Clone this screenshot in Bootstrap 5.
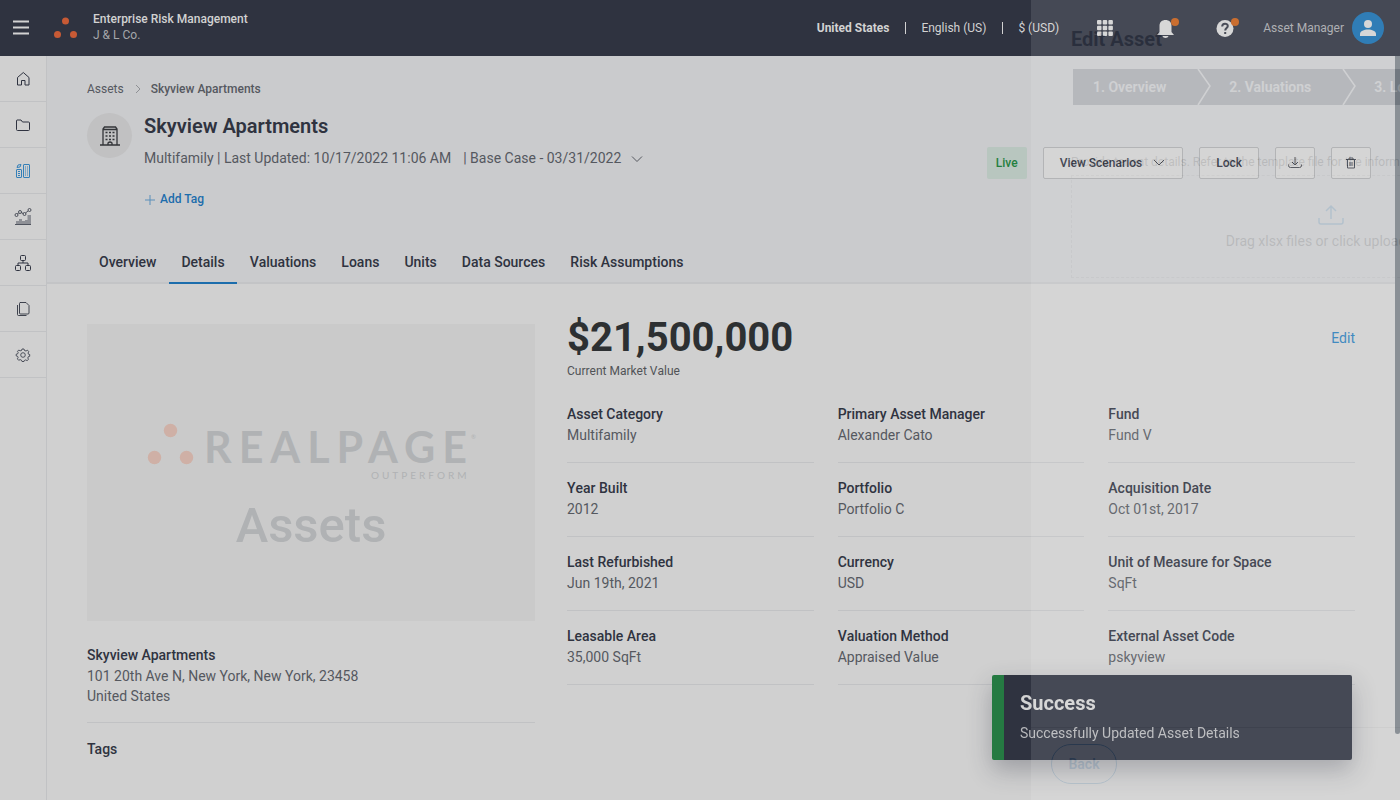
<!DOCTYPE html>
<html lang="en">
<head>
<meta charset="utf-8">
<meta name="viewport" content="width=device-width, initial-scale=1">
<title>Skyview Apartments - Enterprise Risk Management</title>
<link href="https://cdn.jsdelivr.net/npm/bootstrap@5.3.0/dist/css/bootstrap.min.css" rel="stylesheet">
<style>
:root { --ink:#2f3340; --muted:#55585f; --line:#c1c2c4; --blue:#1c6dac; --page:#d0d0d0; --hero:#cacbcd; --light:#d2d2d2; }
body { font-family: Roboto, "Liberation Sans", sans-serif; font-size:14px; line-height:21px; color:var(--muted); background:var(--page); height:100vh; overflow:hidden; }
a { text-decoration:none; }
.fw-medium { font-weight:500; }
.ink { color:var(--ink); }
.topbar { height:56px; background:var(--ink); color:var(--light); font-size:12px; line-height:16px; padding:0 16px 0 12px; }
.dim { color:#a5a7ab; }
.product { margin-left:15px; padding-bottom:2px; }
.plain-btn { background:none; border:0; padding:0; color:inherit; display:flex; align-items:center; }
.split { border-left:1px solid var(--light); height:12px; margin:0 15px 0 16px; }
.icon-btn { width:60px; justify-content:center; }
.avatar { width:32px; height:32px; background:#176ead; margin-left:8px; }
.rail { width:47px; border-right:1px solid var(--line); }
.rail a { height:46px; border-bottom:1px solid var(--line); color:var(--ink); display:flex; align-items:center; justify-content:center; }
.rail a.active { color:#3580b8; }
svg { fill:none; stroke:currentColor; flex-shrink:0; display:block; overflow:visible; }
.shell { height:calc(100vh - 56px); }
.content-pane { padding-right:5px; }
.hero { background:var(--hero); border-bottom:2px solid #c3c4c6; padding:24px 24px 0 40px; }
.crumbs { font-size:12px; line-height:18px; gap:10px; margin-bottom:15px; }
.asset-icon { width:45px; height:45px; background:#c1c1c2; color:#333539; }
.hero h1 { font-size:20px; line-height:26px; font-weight:600; margin-bottom:9px; }
.add-tag { font-size:12px; color:var(--blue); gap:4px; margin-top:20px; }
.actions { margin-top:34px; }
.act { height:32px; border:1px solid #aaabad; border-radius:2px; background:#d0d0d0; color:var(--ink); font-size:12px; font-weight:500; padding:0 16px; display:flex; align-items:center; justify-content:center; gap:10px; }
.act svg { color:#44474f; }
.act-square { width:40px; padding:0; }
.live { height:32px; line-height:32px; width:40px; background:#b8c6bf; color:#24803f; font-size:12px; border-radius:2px; text-align:center; }
.hero-tabs { margin-top:32px; gap:1px; }
.hero-tabs a { padding:10px 12px 9px; border-bottom:2px solid transparent; margin-bottom:-2px; color:var(--ink); font-weight:500; font-kerning:none; }
.hero-tabs a.active { border-color:var(--blue); }
.detail-grid { display:grid; grid-template-columns:448px minmax(0,1fr); gap:32px; padding:40px; }
.photo { width:100%; height:auto; background:#cacaca; margin-bottom:24px; }
.place { line-height:20px; border-bottom:1px solid var(--line); }
.price { font-size:40px; line-height:48px; font-weight:700; color:#2d3032; margin-top:-10px; }
.price-note { font-size:12px; line-height:18px; color:#505357; font-kerning:none; }
.facts { display:grid; grid-template-columns:repeat(3,minmax(0,1fr)); column-gap:24px; row-gap:15px; margin:24px 0 0; }
.facts > div { border-bottom:1px solid var(--line); padding-bottom:16px; }
.facts dt { font-weight:500; color:var(--ink); font-kerning:none; }
.facts dd { margin:0; }
.toast-note { position:fixed; right:48px; bottom:40px; width:360px; background:var(--ink); border-left:12px solid #257a42; border-radius:2px; padding:16px; color:#b7b8bb; box-shadow:0 10px 24px rgba(47,51,64,.32); }
.toast-note h2 { font-size:20px; line-height:24px; font-weight:700; color:var(--light); margin-bottom:8px; }
.drawer { position:fixed; top:0; bottom:0; right:0; width:369px; overflow:hidden; background:#fff; opacity:.11; pointer-events:none; z-index:5; }
.drawer-in { width:600px; padding:24px 40px 0; height:100%; }
.drawer h2 { font-size:20px; line-height:30px; font-weight:700; color:#10182c; margin-bottom:15px; }
.steps { height:36px; background:#20293c; color:#fff; margin:0 0 0 2px; font-weight:600; }
.steps span { padding-left:20px; }
.steps svg { margin-left:30px; }
.help { font-size:12px; line-height:18px; margin:48px 0 4px; color:#333; }
.drop { height:103px; border:1px dashed #bbb; color:#333; padding-top:29px; gap:6px; }
.drop svg { color:#0878c9; }
.drawer-foot { border-top:1px solid #bbb; padding:16px 20px; margin:0 -40px; height:73px; }
.back { width:66px; height:40px; border:1px solid #0067b5; border-radius:20px; color:#0067b5; background:none; font-weight:600; }
.thumb { position:fixed; right:0; top:56px; width:5px; height:calc(85vh - 2px); background:#7c838a; border-radius:0 0 3px 3px; }
</style>
</head>
<body>
<header class="topbar d-flex align-items-center">
  <button class="plain-btn" aria-label="Menu"><svg width="18" height="16" stroke-width="2"><path d="M1 1.500h16M1 7.500h16M1 13.500h16"/></svg></button>
  <svg class="ms-4" width="24" height="22" viewBox="0 0 24 22" style="fill:#c75a35;stroke:none"><circle cx="11.500" cy="4" r="3.500"/><circle cx="3.500" cy="17.500" r="3.500"/><circle cx="19.500" cy="17.500" r="3.500"/></svg>
  <div class="product me-auto"><div class="fw-medium">Enterprise Risk Management</div><div class="dim">J &amp; L Co.</div></div>
  <button class="plain-btn fw-bold">United States</button><span class="split"></span>
  <button class="plain-btn">English (US)</button><span class="split"></span>
  <button class="plain-btn me-3">$ (USD)</button>
  <button class="plain-btn icon-btn" aria-label="Apps"><svg width="16" height="16" style="fill:currentColor;stroke:none"><g id="dots"><rect width="4.500" height="4.500" rx="1"/><rect x="5.700" width="4.500" height="4.500" rx="1"/><rect x="11.400" width="4.500" height="4.500" rx="1"/></g><use href="#dots" y="5.700"/><use href="#dots" y="11.400"/></svg></button>
  <button class="plain-btn icon-btn" aria-label="Notifications"><svg width="24" height="22" viewBox="0 0 24 22" style="fill:currentColor;stroke:none"><path d="M4 18h17l-2.500-3V9c0-4-2.500-6-6-6s-6 2-6 6v6zM9.500 19h6c-.5 2.500-5.500 2.500-6 0z"/><circle cx="22" cy="5" r="4" fill="#c45d17"/></svg></button>
  <button class="plain-btn icon-btn" aria-label="Help"><svg width="24" height="22" viewBox="0 0 24 22" style="stroke:none"><circle cx="12" cy="11.500" r="8.500" fill="currentColor"/><path d="M9.200 9.500c0-4 5.600-3.500 5.600-.5 0 2-2.600 2-2.600 4.500M12.200 15v2" stroke="#343844" stroke-width="2"/><circle cx="22" cy="5" r="4" fill="#c45d17"/></svg></button>
  <span class="dim ms-2">Asset Manager</span>
  <span class="avatar rounded-circle d-flex align-items-center justify-content-center"><svg width="16" height="16" style="fill:currentColor;stroke:none"><circle cx="8" cy="4" r="4"/><path d="M0 16v-2c0-6 16-6 16 0v2z"/></svg></span>
</header>

<div class="shell d-flex">
  <nav class="rail" aria-label="Main">
    <a href="#" aria-label="Home"><svg width="16" height="16"><path d="M2.500 6.500v7.500h4v-4.500h3.500v4.500h4V6.500L8.300 1.500z"/></svg></a>
    <a href="#" aria-label="Files"><svg width="16" height="16"><path d="M2 3h4l1.500 2h6q1 0 1 1v6.500q0 1-1 1H2.500q-1 0-1-1V4q0-1 .5-1z"/></svg></a>
    <a href="#" class="active" aria-label="Assets"><svg width="16" height="16"><rect x="8.500" y="1.500" width="6" height="13" rx=".5"/><rect x="1.500" y="6.500" width="5" height="8" rx=".5"/><path d="M10 4h1m1 0h1m-3 2h1m1 0h1m-3 2h1m1 0h1m-3 2h1m1 0h1m-3 2h1m1 0h1M3 8.500h2M3 10.500h2M3 12.500h2"/><path d="M2 4.500Q2 1 6 1.500 6 5 2 4.500z"/></svg></a>
    <a href="#" aria-label="Analytics"><svg width="18" height="18" stroke-width=".8"><path d="M3.500 6l1-1M7.300 4.700l2 .8M11.500 5l2.500-2"/><circle cx="2.500" cy="7" r="1.500"/><circle cx="6" cy="4" r="1.500"/><circle cx="10.500" cy="6" r="1.500"/><circle cx="15.500" cy="2" r="1.500"/><path d="M2 16v-3h3v-2h3v2h3v-1h2.500V7H17v9z" fill="#8e9096" stroke="none"/><path d="M1 16.500h16"/></svg></a>
    <a href="#" aria-label="Structure"><svg width="18" height="18"><rect x="6.500" y="1.500" width="5" height="5" rx="1"/><rect x="1.500" y="11.500" width="5" height="5" rx="1"/><rect x="11.500" y="11.500" width="5" height="5" rx="1"/><path d="M9 7v2M4 11V9h10v2"/></svg></a>
    <a href="#" aria-label="Documents"><svg width="16" height="16"><path d="M5 1.500h6L14 4.500v7.500q0 1-1 1H5.500q-1 0-1-1V2.500q0-1 1-1M2.500 4v9.500q0 1 1 1h8" stroke-width=".9"/></svg></a>
    <a href="#" aria-label="Settings"><svg width="16" height="16" stroke-width=".8"><circle cx="8" cy="8" r="2.300"/><path d="M6.500 3.500L7 2h2l.5 1.500 1.500.5 1.500-.8 1.300 1.500L13 6l.5 1.200 1.200.3v1.800l-1.400.4-.5 1.300.7 1.400-1.400 1.200-1.400-.7-1.400.6L9 14.500H7l-.6-1.400-1.300-.5-1.400.7-1.300-1.400.7-1.300-.5-1.300-1.400-.4V7.200L2.700 6.800 3.200 5.500l-.7-1.200L3.800 3l1.300.8z"/></svg></a>
  </nav>

  <main class="flex-grow-1 content-pane">
    <section class="hero">
      <nav class="crumbs d-flex align-items-center" aria-label="Breadcrumb"><a href="#" class="text-reset">Assets</a><svg width="7" height="10"><path d="M2 1l4 4-4 4" stroke="#8e9094"/></svg><span class="fw-medium">Skyview Apartments</span></nav>
      <div class="d-flex">
        <span class="asset-icon rounded-circle d-flex align-items-center justify-content-center"><svg width="20" height="20"><path d="M3 19V3l1.500-2h11L17 3v16M3 3.500h14M0 19h20M8 19v-2q2-2 4 0v2" stroke-width="1.300"/><path d="M5.500 6.500h2m1.500 0h2m1.500 0h2m-9 3.500h2m1.500 0h2m1.500 0h2m-9 3.500h2m1.500 0h2m1.500 0h2" stroke-width="1.600"/></svg></span>
        <div class="ms-2 ps-1 flex-grow-1">
          <h1 class="ink">Skyview Apartments</h1>
          <div class="d-flex align-items-center"><span>Multifamily | Last Updated: 10/17/2022 11:06 AM</span><button class="plain-btn ms-2 ps-1">| Base Case - 03/31/2022 <svg class="ms-2" width="16" height="10"><path d="M3 2.500l5 5 5-5"/></svg></button></div>
          <button class="plain-btn add-tag fw-medium"><svg width="12" height="12"><path d="M6 1v10M1 6h10" stroke="#5a8fba"/></svg>Add Tag</button>
        </div>
        <div class="actions d-flex gap-3">
          <span class="live fw-medium">Live</span>
          <button class="act">View Scenarios <svg width="14" height="8"><path d="M2 1l5 5 5-5"/></svg></button>
          <button class="act">Lock</button>
          <button class="act act-square" aria-label="Download"><svg width="14" height="14"><path d="M7 1v8M4 6l3 3 3-3M.5 8.500v1q0 2 2 2h9q2 0 2-2v-1"/></svg></button>
          <button class="act act-square" aria-label="Delete"><svg width="12" height="12"><path d="M1 2.500h10M4 2V1h4v1M2.500 3v8h7V3M5 5v4M7 5v4"/></svg></button>
        </div>
      </div>
      <nav class="hero-tabs d-flex" aria-label="Asset sections"><a href="#">Overview</a><a href="#" class="active">Details</a><a href="#">Valuations</a><a href="#">Loans</a><a href="#">Units</a><a href="#">Data Sources</a><a href="#">Risk Assumptions</a></nav>
    </section>

    <section class="detail-grid">
      <div>
        <svg class="photo" viewBox="0 0 448 297" style="stroke:none;fill:#b0b2b4" role="img" aria-label="RealPage Outperform Assets">
          <g fill="#cfb0a6"><circle cx="83.500" cy="106.500" r="6.700"/><circle cx="67.500" cy="133.500" r="6.700"/><circle cx="99.500" cy="133.500" r="6.700"/></g>
          <text x="117" y="139" font-family="Lato" font-weight="700" font-size="43" letter-spacing="7">REALPAGE</text>
          <text x="384" y="115" font-family="Lato" font-size="6">®</text>
          <text x="284" y="155" font-family="Lato" font-size="10" letter-spacing="3">OUTPERFORM</text>
          <text x="224" y="218" text-anchor="middle" font-family="Roboto" font-weight="500" font-size="49">Assets</text>
        </svg>
        <div class="fw-medium ink">Skyview Apartments</div>
        <address class="place mb-0 pb-3">101 20th Ave N, New York, New York, 23458<br>United States</address>
        <div class="fw-medium ink mt-3">Tags</div>
      </div>
      <div>
        <div class="d-flex justify-content-between"><div><div class="price">$21,500,000</div><div class="price-note">Current Market Value</div></div><a href="#" class="pt-1" style="color:#2b7cb9">Edit</a></div>
        <dl class="facts">
          <div><dt>Asset Category</dt><dd>Multifamily</dd></div><div><dt>Primary Asset Manager</dt><dd>Alexander Cato</dd></div><div><dt>Fund</dt><dd>Fund V</dd></div>
          <div><dt>Year Built</dt><dd>2012</dd></div><div><dt>Portfolio</dt><dd>Portfolio C</dd></div><div><dt>Acquisition Date</dt><dd>Oct 01st, 2017</dd></div>
          <div><dt>Last Refurbished</dt><dd>Jun 19th, 2021</dd></div><div><dt>Currency</dt><dd>USD</dd></div><div><dt>Unit of Measure for Space</dt><dd>SqFt</dd></div>
          <div><dt>Leasable Area</dt><dd>35,000 SqFt</dd></div><div><dt>Valuation Method</dt><dd>Appraised Value</dd></div><div><dt>External Asset Code</dt><dd>pskyview</dd></div>
        </dl>
      </div>
    </section>
  </main>
</div>

<div class="thumb"></div>
<div class="toast-note" role="status"><h2>Success</h2><div>Successfully Updated Asset Details</div></div>

<aside class="drawer" aria-label="Edit Asset">
  <div class="drawer-in d-flex flex-column">
    <h2>Edit Asset</h2>
    <div class="steps d-flex align-items-center">
      <span>1. Overview</span><svg width="13" height="36" stroke-width="1.500"><path d="M2 0l12 17L2 36"/></svg>
      <span>2. Valuations</span><svg width="13" height="36" stroke-width="1.500"><path d="M2 0l12 17L2 36"/></svg>
      <span>3. Loans</span>
    </div>
    <p class="help">Provide tenant details. Refer to the template file for the information.</p>
    <div class="drop d-flex flex-column align-items-center"><svg width="26" height="20" stroke-width="1.500"><path d="M13 14V1M8 6l5-5 5 5M1 13v4q0 2 2 2h20q2 0 2-2v-4"/></svg><span>Drag xlsx files or click upload icon</span></div>
    <div class="drawer-foot mt-auto"><button class="back">Back</button></div>
  </div>
</aside>
<script src="https://cdn.jsdelivr.net/npm/bootstrap@5.3.0/dist/js/bootstrap.bundle.min.js"></script>
</body>
</html>
